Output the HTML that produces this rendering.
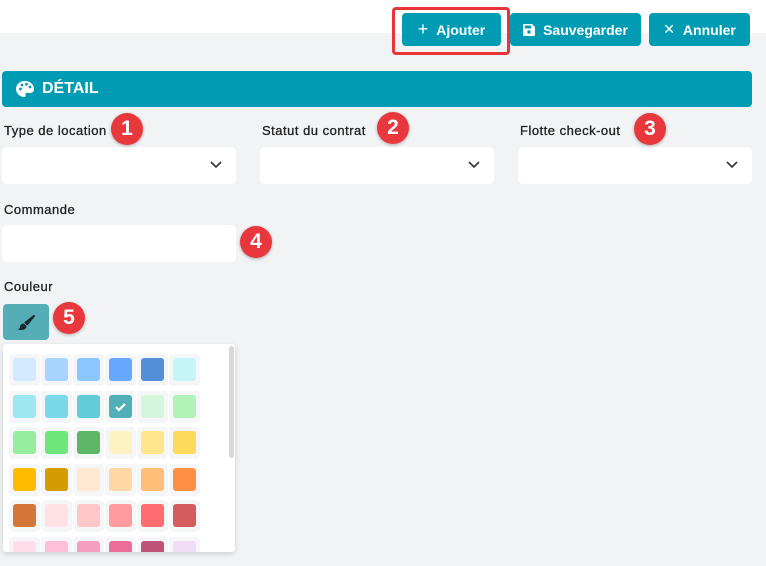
<!DOCTYPE html>
<html><head><meta charset="utf-8"><style>
*{box-sizing:border-box;margin:0;padding:0}
body{width:766px;height:566px;overflow:hidden;background:#f2f3f5;font-family:"Liberation Sans",sans-serif;position:relative;color:#222}
.top{position:absolute;left:0;top:0;width:766px;height:33px;background:#fff}
.btn{position:absolute;top:13px;height:33px;background:#019cb4;border-radius:4px;color:#fff;font-weight:bold;font-size:14px;display:flex;align-items:center;justify-content:center;gap:8px}
.hl{position:absolute;left:392px;top:7px;width:118px;height:48px;border:3px solid #e8343b;border-radius:4px}
.bar{position:absolute;left:2px;top:71px;width:750px;height:36px;background:#019cb4;border-radius:4px;color:#fff;font-weight:bold;font-size:16px;display:flex;align-items:center;padding-left:14px;gap:8px}
.lbl{position:absolute;font-size:13px;color:#222;letter-spacing:0.5px;-webkit-text-stroke:0.3px #222}
.sel{position:absolute;height:37px;width:234px;background:#fff;border-radius:5px}
.sel svg{position:absolute;right:14px;top:14px}
.badge{position:absolute;width:32px;height:32px;border-radius:50%;background:#e8383d;color:#fff;font-weight:bold;font-size:21px;display:flex;align-items:center;justify-content:center;box-shadow:0 1px 3px rgba(0,0,0,.3)}
.pbtn{position:absolute;left:3px;top:304px;width:46px;height:36px;background:#55adb5;border-radius:4px}
.pal{position:absolute;left:3px;top:344px;width:232px;height:208px;background:#fff;box-shadow:0 2px 6px rgba(0,0,0,.15);overflow:hidden;border-radius:3px}
.cell{position:absolute;width:31px;height:32px;background:#f5f6f8;border-radius:4px}
.cell i{position:absolute;left:4px;top:4px;width:23px;height:23px;border-radius:3px}
.sb{position:absolute;left:226px;top:2px;width:5px;height:112px;background:#d8d8d8;border-radius:3px}
</style></head><body>
<div class="top"></div>
<div class="hl"></div>
<div class="btn" style="left:402px;width:99px"><span style="font-size:18px;font-weight:normal">+</span>Ajouter</div>
<div class="btn" style="left:510px;width:131px"><svg width="12" height="12" viewBox="0 0 12 12"><path d="M1 0h8l3 3v8a1 1 0 0 1-1 1H1a1 1 0 0 1-1-1V1a1 1 0 0 1 1-1z" fill="#fff"/><rect x="2" y="1.5" width="6" height="3" fill="#019cb4"/><circle cx="6" cy="8" r="1.7" fill="#019cb4"/></svg>Sauvegarder</div>
<div class="btn" style="left:649px;width:101px"><span style="font-weight:normal">✕</span>Annuler</div>
<div class="bar"><svg width="18" height="16" viewBox="0 0 18 16"><path d="M9 0C4 0 0 3.5 0 8s4 8 8 8c1.5 0 2-1 1.5-2s0-2 1.5-2H14c2.5 0 4-1.5 4-4C18 3.5 14 0 9 0z" fill="#fff"/><circle cx="4.5" cy="8" r="1.4" fill="#019cb4"/><circle cx="6" cy="4" r="1.4" fill="#019cb4"/><circle cx="10.5" cy="3.3" r="1.4" fill="#019cb4"/><circle cx="14" cy="6" r="1.4" fill="#019cb4"/></svg>DÉTAIL</div>
<div class="lbl" style="left:4px;top:123px">Type de location</div>
<div class="lbl" style="left:262px;top:123px">Statut du contrat</div>
<div class="lbl" style="left:520px;top:123px">Flotte check-out</div>
<div class="sel" style="left:2px;top:147px"><svg width="12" height="8"><path d="M1 1l5 5 5-5" stroke="#333" stroke-width="1.6" fill="none"/></svg></div>
<div class="sel" style="left:260px;top:147px"><svg width="12" height="8"><path d="M1 1l5 5 5-5" stroke="#333" stroke-width="1.6" fill="none"/></svg></div>
<div class="sel" style="left:518px;top:147px"><svg width="12" height="8"><path d="M1 1l5 5 5-5" stroke="#333" stroke-width="1.6" fill="none"/></svg></div>
<div class="lbl" style="left:4px;top:202px">Commande</div>
<div class="sel" style="left:2px;top:225px"></div>
<div class="lbl" style="left:4px;top:279px">Couleur</div>
<div class="pbtn"><svg style="position:absolute;left:14px;top:11px" width="18" height="16" viewBox="0 0 18 16"><path d="M17 0.5L8 7.5l2.3 2.3L17.5 1z" fill="#1b2830" stroke="#1b2830" stroke-width="1.2" stroke-linejoin="round"/><path d="M7 8.5c-2.5 0-4 1.5-4 3.5 0 1-1 2-2.5 2.5 4 1.3 9 .5 9-3.5z" fill="#1b2830"/></svg></div>
<div class="badge" style="left:111px;top:113px">1</div>
<div class="badge" style="left:377px;top:112px">2</div>
<div class="badge" style="left:634px;top:113px">3</div>
<div class="badge" style="left:240px;top:226px">4</div>
<div class="badge" style="left:53px;top:302px">5</div>
<div class="pal" id="pal"><div class="sb"></div>
<div class="cell" style="left:6px;top:10px"><i style="background:#d3e9ff"></i></div>
<div class="cell" style="left:38px;top:10px"><i style="background:#a6d4ff"></i></div>
<div class="cell" style="left:70px;top:10px"><i style="background:#8cc6ff"></i></div>
<div class="cell" style="left:102px;top:10px"><i style="background:#66a8ff"></i></div>
<div class="cell" style="left:134px;top:10px"><i style="background:#528fd8"></i></div>
<div class="cell" style="left:166px;top:10px"><i style="background:#c6f5f7"></i></div>
<div class="cell" style="left:6px;top:47px"><i style="background:#9de7f0"></i></div>
<div class="cell" style="left:38px;top:47px"><i style="background:#7ad8ea"></i></div>
<div class="cell" style="left:70px;top:47px"><i style="background:#62cbd8"></i></div>
<div class="cell" style="left:102px;top:47px"><i style="background:#52afb8"><svg width="23" height="23"><path d="M7 12l3 3 6-6" stroke="#fff" stroke-width="2.2" fill="none"/></svg></i></div>
<div class="cell" style="left:134px;top:47px"><i style="background:#d4f7dc"></i></div>
<div class="cell" style="left:166px;top:47px"><i style="background:#b1f2b8"></i></div>
<div class="cell" style="left:6px;top:83px"><i style="background:#95ee9e"></i></div>
<div class="cell" style="left:38px;top:83px"><i style="background:#6ee67c"></i></div>
<div class="cell" style="left:70px;top:83px"><i style="background:#5db766"></i></div>
<div class="cell" style="left:102px;top:83px"><i style="background:#fff2c2"></i></div>
<div class="cell" style="left:134px;top:83px"><i style="background:#ffe68c"></i></div>
<div class="cell" style="left:166px;top:83px"><i style="background:#ffd95a"></i></div>
<div class="cell" style="left:6px;top:120px"><i style="background:#ffbb00"></i></div>
<div class="cell" style="left:38px;top:120px"><i style="background:#d69b00"></i></div>
<div class="cell" style="left:70px;top:120px"><i style="background:#ffe8cf"></i></div>
<div class="cell" style="left:102px;top:120px"><i style="background:#ffd7a6"></i></div>
<div class="cell" style="left:134px;top:120px"><i style="background:#ffbd78"></i></div>
<div class="cell" style="left:166px;top:120px"><i style="background:#ff8f42"></i></div>
<div class="cell" style="left:6px;top:156px"><i style="background:#d47638"></i></div>
<div class="cell" style="left:38px;top:156px"><i style="background:#ffe1e3"></i></div>
<div class="cell" style="left:70px;top:156px"><i style="background:#ffc6c8"></i></div>
<div class="cell" style="left:102px;top:156px"><i style="background:#ff9b9e"></i></div>
<div class="cell" style="left:134px;top:156px"><i style="background:#ff6c70"></i></div>
<div class="cell" style="left:166px;top:156px"><i style="background:#d45c5e"></i></div>
<div class="cell" style="left:6px;top:193px"><i style="background:#ffdeea"></i></div>
<div class="cell" style="left:38px;top:193px"><i style="background:#ffbfd6"></i></div>
<div class="cell" style="left:70px;top:193px"><i style="background:#f59ebd"></i></div>
<div class="cell" style="left:102px;top:193px"><i style="background:#ec6d97"></i></div>
<div class="cell" style="left:134px;top:193px"><i style="background:#c05478"></i></div>
<div class="cell" style="left:166px;top:193px"><i style="background:#f0dcf7"></i></div>
</div>
</body></html>
